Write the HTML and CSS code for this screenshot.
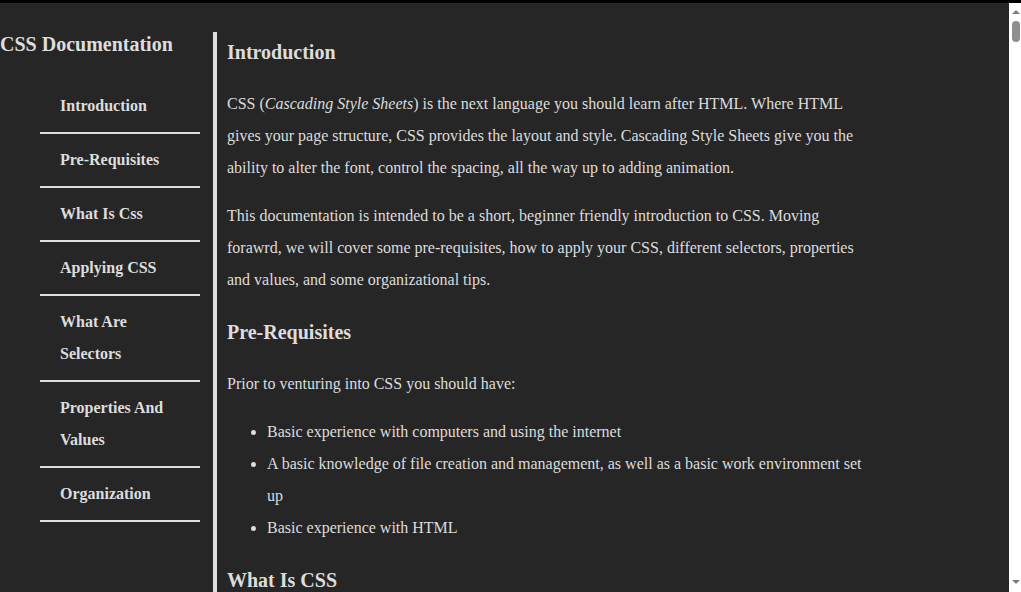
FILE: index.html
```html
<!DOCTYPE html>
<html lang="en">
<head>
<meta charset="utf-8">
<title>CSS Documentation</title>
<link rel="stylesheet" href="styles.css">
</head>
<body>
<div class="topbar"></div>
<div class="frame">
  <div class="scroller">
    <div class="layout">
      <nav class="nav" id="navbar">
        <header class="nav-title">CSS Documentation</header>
        <ul class="nav-list">
          <li class="nav-item"><a class="nav-link" href="#Introduction">Introduction</a></li>
          <li class="nav-item"><a class="nav-link" href="#Pre-Requisites">Pre-Requisites</a></li>
          <li class="nav-item"><a class="nav-link" href="#What_Is_Css">What Is Css</a></li>
          <li class="nav-item"><a class="nav-link" href="#Applying_CSS">Applying CSS</a></li>
          <li class="nav-item"><a class="nav-link" href="#What_Are_Selectors">What Are Selectors</a></li>
          <li class="nav-item"><a class="nav-link" href="#Properties_And_Values">Properties And Values</a></li>
          <li class="nav-item"><a class="nav-link" href="#Organization">Organization</a></li>
        </ul>
      </nav>
      <main class="main" id="main-doc">
        <section class="section" id="Introduction">
          <header class="heading">Introduction</header>
          <p class="text">CSS (<em>Cascading Style Sheets</em>) is the next language you should learn after HTML. Where HTML gives your page structure, CSS provides the layout and style. Cascading Style Sheets give you the ability to alter the font, control the spacing, all the way up to adding animation.</p>
          <p class="text">This documentation is intended to be a short, beginner friendly introduction to CSS. Moving forawrd, we will cover some pre-requisites, how to apply your CSS, different selectors, properties and values, and some organizational tips.</p>
        </section>
        <section class="section" id="Pre-Requisites">
          <header class="heading">Pre-Requisites</header>
          <p class="text">Prior to venturing into CSS you should have:</p>
          <ul class="bullets">
            <li>Basic experience with computers and using the internet</li>
            <li>A basic knowledge of file creation and management, as well as a basic work environment set up</li>
            <li>Basic experience with HTML</li>
          </ul>
        </section>
        <section class="section" id="What_Is_Css">
          <header class="heading">What Is CSS</header>
          <p class="text">CSS is a stylesheet language used to describe the presentation of a document written in HTML. It describes how elements should be rendered on screen, on paper, in speech, or on other media.</p>
          <p class="text">CSS is one of the core languages of the open web and is standardized across web browsers according to the W3C specification.</p>
        </section>
        <section class="section" id="Applying_CSS">
          <header class="heading">Applying CSS</header>
          <p class="text">There are three ways to apply CSS to an HTML document: inline styles, internal style sheets, and external style sheets.</p>
          <ul class="bullets">
            <li>Inline styles are written directly on an element with the style attribute</li>
            <li>Internal style sheets are written inside a style element in the head of the document</li>
            <li>External style sheets are separate files linked with a link element</li>
          </ul>
        </section>
        <section class="section" id="What_Are_Selectors">
          <header class="heading">What Are Selectors</header>
          <p class="text">Selectors define which elements a set of CSS rules applies to. The most common selectors are type selectors, class selectors, and ID selectors.</p>
          <ul class="bullets">
            <li>Type selectors match every element of a given name, such as p or h1</li>
            <li>Class selectors match every element with a given class, written with a leading dot</li>
            <li>ID selectors match the one element with a given id, written with a leading hash</li>
          </ul>
        </section>
        <section class="section" id="Properties_And_Values">
          <header class="heading">Properties And Values</header>
          <p class="text">Every CSS declaration is made of a property and a value, separated by a colon and ended with a semicolon. The property names the feature you want to change and the value describes how to change it.</p>
          <ul class="bullets">
            <li>color sets the color of the text inside an element</li>
            <li>background-color sets the color behind an element</li>
            <li>margin and padding control the space outside and inside an element</li>
          </ul>
        </section>
        <section class="section" id="Organization">
          <header class="heading">Organization</header>
          <p class="text">As your stylesheets grow, keeping them organized becomes important. A well organized stylesheet is easier to read, easier to debug, and easier to change.</p>
          <ul class="bullets">
            <li>Group related rules together and separate the groups with comments</li>
            <li>Order your rules from general to specific</li>
            <li>Use clear, descriptive class names</li>
          </ul>
        </section>
      </main>
    </div>
  </div>
  <div class="scrollbar" aria-hidden="true">
    <div class="sb-button sb-up"><span class="arrow-up"></span></div>
    <div class="sb-track"><span class="sb-thumb"></span></div>
    <div class="sb-button sb-down"><span class="arrow-down"></span></div>
  </div>
</div>
</body>
</html>
```

FILE: styles.css
```css
html, body {
  margin: 0;
  padding: 0;
  height: 100%;
}

body {
  display: flex;
  flex-direction: column;
  overflow: hidden;
  background: #262626;
  color: #dddddd;
  font-family: "Liberation Serif", "Times New Roman", serif;
  font-size: 16px;
}

.topbar {
  flex: 0 0 3px;
  background: #000000;
}

.frame {
  flex: 1 1 auto;
  min-height: 0;
  display: flex;
}

.scroller {
  flex: 1 1 auto;
  min-width: 0;
  overflow-y: auto;
  scrollbar-width: none;
  background: #262626;
}

.scrollbar {
  flex: 0 0 12px;
  display: flex;
  flex-direction: column;
  background: #ffffff;
}

.sb-button {
  flex: 0 0 18px;
  box-sizing: border-box;
  padding-left: 3px;
}

.sb-up {
  padding-top: 7px;
}

.sb-down {
  padding-top: 6px;
}

.arrow-up,
.arrow-down {
  display: block;
  width: 0;
  height: 0;
  border-left: 4px solid transparent;
  border-right: 4px solid transparent;
}

.arrow-up {
  border-bottom: 4px solid #7c7c7c;
}

.arrow-down {
  border-top: 4px solid #7c7c7c;
}

.sb-track {
  flex: 1 1 auto;
  padding-left: 3px;
}

.sb-thumb {
  display: block;
  width: 8px;
  height: 21px;
  border-radius: 4px;
  background: #8e8e8e;
}

.layout {
  display: flex;
  align-items: flex-start;
}

.nav {
  flex: 0 0 213px;
  width: 213px;
}

.nav-title {
  margin: 29px 0 0 0;
  font-size: 20px;
  font-weight: bold;
  line-height: 24px;
  color: #dddddd;
}

.nav-list {
  list-style: none;
  margin: 24px 0 0 0;
  padding: 0 0 0 40px;
}

.nav-item {
  box-sizing: border-box;
  width: 160px;
  padding: 10px 20px;
  border-bottom: 2px solid #dddddd;
  line-height: 32px;
}

.nav-link {
  color: #dddddd;
  font-weight: bold;
  text-decoration: none;
}

.main {
  flex: 0 0 auto;
  width: 645px;
  margin-top: 29px;
  padding: 0 10px;
  border-left: 4px solid #dddddd;
  min-height: 100vh;
}

.heading {
  display: block;
  margin: 16px 0;
  font-size: 20px;
  font-weight: bold;
  line-height: 40px;
  color: #dddddd;
}

.section:first-child .heading {
  margin-top: 0;
}

.text {
  margin: 16px 0;
  line-height: 32px;
}

.bullets {
  margin: 16px 0;
  padding-left: 40px;
  line-height: 32px;
}
```
